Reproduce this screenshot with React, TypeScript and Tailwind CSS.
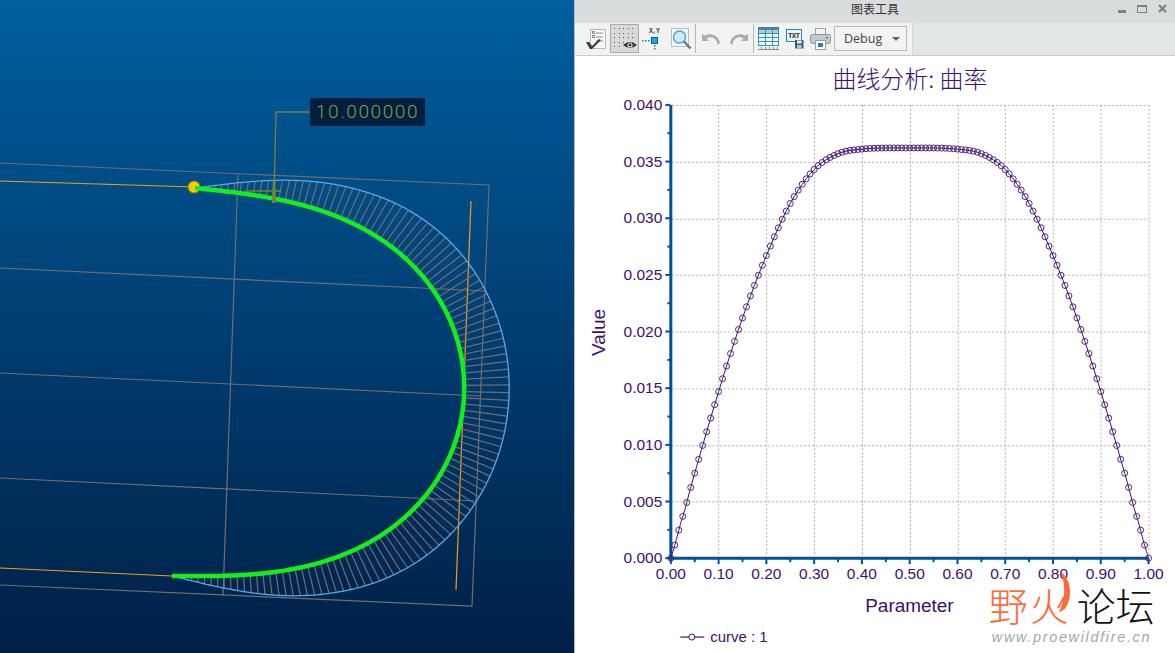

type P = [number, number];

function smooth(pts: P[], n = 12): P[] {
  const out: P[] = [];
  for (let i = 0; i < pts.length - 1; i++) {
    const p0 = pts[Math.max(i - 1, 0)], p1 = pts[i], p2 = pts[i + 1], p3 = pts[Math.min(i + 2, pts.length - 1)];
    for (let k = 0; k < n; k++) {
      const t = k / n, a = t * t, b = a * t;
      const f = (j: 0 | 1) =>
        0.5 * (2 * p1[j] + (p2[j] - p0[j]) * t + (2 * p0[j] - 5 * p1[j] + 4 * p2[j] - p3[j]) * a + (3 * p1[j] - p0[j] - 3 * p2[j] + p3[j]) * b);
      out.push([f(0), f(1)]);
    }
  }
  out.push(pts[pts.length - 1]);
  return out;
}
const toStr = (p: P[]) => p.map((q) => `${q[0].toFixed(1)},${q[1].toFixed(1)}`).join(" ");

const half: P[] = [[0, 0], [0.01, 0.0014], [0.02, 0.003], [0.03, 0.0044], [0.05, 0.0075], [0.1, 0.0147], [0.15, 0.0212], [0.2, 0.0267], [0.25, 0.0313], [0.3, 0.0343], [0.35, 0.0357], [0.4, 0.0361], [0.45, 0.0362], [0.5, 0.0362]];
const table: P[] = [...half, ...half.slice(0, -1).reverse().map(([t, v]): P => [1 - t, v])];
const fine = smooth(table, 6);
const valueAt = (t: number) => {
  for (let i = 1; i < fine.length; i++) {
    if (fine[i][0] >= t) {
      const [a, b] = [fine[i - 1], fine[i]];
      const u = b[0] === a[0] ? 0 : (t - a[0]) / (b[0] - a[0]);
      return a[1] + (b[1] - a[1]) * u;
    }
  }
  return 0;
};

// The green curve is integrated from its own curvature profile, then fitted to its two end points.
const STEPS = 480;
const START: P = [195, 188];
const END: P = [172, 576];
const TURN = 3.04;
const STRETCH = 1.052;
function buildCurve() {
  const total = Array.from({ length: STEPS }, (_, i) => valueAt((i + 0.5) / STEPS)).reduce((a, b) => a + b, 0);
  let h = 0, x = 0, y = 0;
  const raw: P[] = [[0, 0]];
  for (let i = 0; i < STEPS; i++) {
    const dh = (valueAt((i + 0.5) / STEPS) / total) * TURN;
    const mid = h + dh / 2;
    x += Math.cos(mid) / STEPS;
    y += Math.sin(mid) / STEPS;
    h += dh;
    raw.push([x, y]);
  }
  const cx = END[0] - START[0], cy = END[1] - START[1];
  const scale = Math.hypot(cx, cy) / Math.hypot(x, y);
  const rot = Math.atan2(cy, cx) - Math.atan2(y, x);
  const c = Math.cos(rot), s = Math.sin(rot);
  const g: P[] = raw.map(([rx, ry]) => {
    const gx = START[0] + (rx * c - ry * s) * scale;
    const gy = START[1] + (rx * s + ry * c) * scale;
    const line = START[0] + ((gy - START[1]) / cy) * cx;
    return [line + (gx - line) * STRETCH, gy];
  });
  const comb = 45 / 0.0362;
  const o: P[] = g.map((p, i) => {
    const a = g[Math.max(i - 1, 0)], b = g[Math.min(i + 1, STEPS)];
    const dx = b[0] - a[0], dy = b[1] - a[1], d = Math.hypot(dx, dy);
    const k = valueAt(i / STEPS) * comb;
    return [p[0] + (dy / d) * k, p[1] - (dx / d) * k];
  });
  return { g, o };
}
const { g: green, o: blue } = buildCurve();
const hatchLines: [P, P][] = [];
for (let i = 4; i < STEPS; i += 4) hatchLines.push([green[i], blue[i]]);

const X0 = 670.5, XW = 478.5, Y0 = 558, YH = 454;
const px = (t: number) => X0 + t * XW;
const py = (v: number) => Y0 - (v / 0.04) * YH;
const markers = Array.from({ length: 121 }, (_, i) => i / 120);
const curvePts = fine.map(([t, v]): P => [px(t), py(v)]);

const INK = "#3d1070";
const AXIS = "#00509b";
const FRAME = "#726e6e";

function CanvasView() {
  return (
    <div className="relative w-[574px] h-full bg-gradient-to-b from-[#005fa0] to-[#002047] overflow-hidden">
      <svg width="574" height="653" className="block">
        <g stroke={FRAME} strokeWidth="1.2" fill="none">
          <polyline points="0,163 489,185 472,606 0,585" />
          <line x1="0" y1="268" x2="485" y2="291" />
          <line x1="0" y1="373" x2="480" y2="396" />
          <line x1="0" y1="478" x2="476" y2="501" />
          <line x1="238" y1="174" x2="223" y2="596" />
        </g>
        <g stroke="#f59a1e" strokeWidth="1.2" fill="none">
          <line x1="0" y1="181" x2="195" y2="187" />
          <line x1="0" y1="568" x2="172" y2="576" />
          <line x1="471" y1="201" x2="456" y2="590" />
        </g>
        <g stroke={FRAME} strokeWidth="1.2">
          {hatchLines.map((l, i) => (
            <line key={i} x1={l[0][0]} y1={l[0][1]} x2={l[1][0]} y2={l[1][1]} />
          ))}
        </g>
        <polyline points={toStr(blue)} fill="none" stroke="#5ba8e6" strokeWidth="1.3" />
        <circle cx="194" cy="187" r="6" fill="#ffcc00" stroke="#8f7a10" strokeWidth="1.2" />
        <polyline points={toStr(green)} fill="none" stroke="#12f01c" strokeWidth="4.5" />
        <g stroke="#76833c" fill="none" strokeWidth="1.3">
          <polyline points="310,112 276,112 274,196" />
          <line x1="245" y1="191" x2="281" y2="191" />
        </g>
        <polygon points="272,203 276,203 276,197 275,180 273,180 272,197" fill="#76833c" />
      </svg>
      <div className="absolute left-[310px] top-[98px] w-[115px] h-[28px] bg-[#001f3d] flex items-center justify-center text-[#8a9c44] text-[19px] font-light tracking-[1.6px] font-['Roboto',sans-serif]">
        10.000000
      </div>
    </div>
  );
}

function IconCheck() {
  return (
    <svg width="20" height="22" viewBox="0 0 20 22">
      <rect x="4.5" y="1.5" width="15" height="19" fill="#f7f7f7" stroke="#b5b9bd" />
      <g stroke="#8a9299"><line x1="10" y1="5" x2="17" y2="5" /><line x1="10" y1="9" x2="17" y2="9" /><line x1="10" y1="13" x2="17" y2="13" /></g>
      <g fill="none" stroke="#8a9299"><rect x="6.5" y="3.5" width="2" height="2" /><rect x="6.5" y="7.5" width="2" height="2" /></g>
      <path d="M0 14 L3 14 L6 18 L13 11 L15 12 L6 21 L4 21 Z" fill="#3b3b3b" />
    </svg>
  );
}
function IconGrid() {
  const dots: P[] = [];
  for (let r = 0; r < 5; r++) for (let c = 0; c < 5; c++) if (!(r === 4 && c > 1)) dots.push([3 + c * 4.5, 3 + r * 4.5]);
  return (
    <svg width="27" height="27" viewBox="0 0 27 27">
      {dots.map(([x, y], i) => <rect key={i} x={Math.round(x)} y={Math.round(y)} width="1" height="1" fill="#555" />)}
      <path d="M12 20 Q19 14 26 20 Q19 26 12 20 Z" fill="#333" />
      <circle cx="19" cy="20" r="2.6" fill="#d8dada" />
      <circle cx="19" cy="20" r="1.4" fill="#333" />
    </svg>
  );
}
function IconXY() {
  return (
    <svg width="18" height="24" viewBox="0 0 18 24">
      <text x="7" y="6" fontSize="6.5" textLength="11" fontFamily="'Liberation Mono', monospace" fontWeight="700" fill="#444">X,Y</text>
      <g fill="#0e7fb8">
        <rect x="0" y="13" width="1.5" height="1.5" /><rect x="3" y="13" width="1.5" height="1.5" /><rect x="6" y="13" width="1.5" height="1.5" />
        <rect x="12" y="18" width="1.5" height="1.5" /><rect x="12" y="21" width="1.5" height="1.5" />
      </g>
      <rect x="9.5" y="10.5" width="6" height="6" fill="#1fa6e0" stroke="#0a5f8f" />
    </svg>
  );
}
function IconZoom() {
  return (
    <svg width="21" height="22" viewBox="0 0 21 22">
      <rect x="0.5" y="0.5" width="17" height="18" fill="#f4f6f7" stroke="#b9bec2" />
      <circle cx="8.5" cy="9" r="6" fill="#cfeafa" stroke="#4ba3cf" strokeWidth="1.4" />
      <path d="M13 13.5 L19.5 20.5" stroke="#6f7478" strokeWidth="2.4" />
    </svg>
  );
}
function IconUndo({ flip }: { flip?: boolean }) {
  return (
    <svg width="20" height="14" viewBox="0 0 20 14" className={flip ? "-scale-x-100" : ""}>
      <path d="M1 2 L1 9 L8 9 L5.6 6.6 C9 4 14 5 16 10 L16.5 13 L19 11 C18 4 10 0 4 3.8 Z" fill="#a9adb0" />
    </svg>
  );
}
function IconTable() {
  return (
    <svg width="21" height="24" viewBox="0 0 21 24">
      <rect x="0" y="0" width="21" height="2" fill="#6f767b" />
      <rect x="0.5" y="2.5" width="20" height="16" fill="#f7fafb" stroke="#2e93c5" />
      <rect x="1" y="3" width="19" height="3" fill="#9fd0ea" />
      <g stroke="#2e93c5"><line x1="1" y1="6.5" x2="20" y2="6.5" /><line x1="1" y1="10.5" x2="20" y2="10.5" /><line x1="1" y1="14.5" x2="20" y2="14.5" /><line x1="7.5" y1="3" x2="7.5" y2="18" /><line x1="14.5" y1="3" x2="14.5" y2="18" /></g>
      <g stroke="#888"><line x1="0" y1="22.5" x2="21" y2="22.5" /><line x1="3.5" y1="20" x2="3.5" y2="22" /><line x1="7.5" y1="20" x2="7.5" y2="22" /><line x1="11.5" y1="20" x2="11.5" y2="22" /><line x1="15.5" y1="20" x2="15.5" y2="22" /><line x1="19.5" y1="20" x2="19.5" y2="22" /></g>
    </svg>
  );
}
function IconTxt() {
  return (
    <svg width="18" height="20" viewBox="0 0 18 20">
      <rect x="0.5" y="0.5" width="15" height="12" fill="#eef6fb" stroke="#1b86bd" />
      <text x="2" y="9" fontSize="7.5" fontWeight="700" fontFamily="'Liberation Mono', monospace" fill="#333" textLength="12">TXT</text>
      <rect x="9" y="11" width="8.5" height="8.5" fill="#4a5a66" />
      <rect x="11" y="11.5" width="4.5" height="3" fill="#e8eef2" />
      <rect x="11" y="16" width="4.5" height="3.5" fill="#9fd0ea" />
    </svg>
  );
}
function IconPrint() {
  return (
    <svg width="21" height="22" viewBox="0 0 21 22">
      <rect x="5.5" y="0.5" width="10" height="6" fill="#f4f4f4" stroke="#9aa0a4" />
      <rect x="0.5" y="6.5" width="20" height="9" rx="2" fill="#c3c8cc" stroke="#8d9398" />
      <rect x="16" y="9" width="2" height="1.5" fill="#3f8fbd" />
      <rect x="5.5" y="12.5" width="10" height="9" fill="#fff" stroke="#9aa0a4" />
      <rect x="8" y="15" width="5" height="4" fill="#2f7fa8" />
    </svg>
  );
}

function Toolbar() {
  return (
    <div className="flex h-[33px] bg-[#e3e6e6] border-b border-[#c9cccc]">
      <div className="flex items-center w-[338px] h-[32px] bg-[#f1f2f2] border-r border-[#d5d8d8]">
        <div className="ml-[11px] w-[20px] flex"><IconCheck /></div>
        <div className="ml-[4px] w-[29px] h-[29px] flex items-center justify-center bg-[#d8dada] border border-[#a9abab]"><IconGrid /></div>
        <div className="ml-[3px] w-[18px] flex"><IconXY /></div>
        <div className="ml-[11px] w-[21px] flex"><IconZoom /></div>
        <div className="ml-[3px] w-px h-[29px] bg-[#b4b7b7]" />
        <div className="ml-[5px] w-[20px] flex"><IconUndo /></div>
        <div className="ml-[8px] w-[20px] flex"><IconUndo flip /></div>
        <div className="ml-[4px] w-px h-[29px] bg-[#b4b7b7]" />
        <div className="ml-[4px] w-[21px] flex"><IconTable /></div>
        <div className="ml-[7px] w-[18px] flex"><IconTxt /></div>
        <div className="ml-[6px] w-[21px] flex"><IconPrint /></div>
        <div className="ml-[3px] w-[73px] h-[25px] flex items-center justify-between pl-[9px] pr-[6px] bg-[#f2f3f3] border border-[#b9bcbc] text-[12.5px] text-[#444] font-['Open_Sans','Liberation_Sans',sans-serif]">
          <span>Debug</span>
          <span className="w-0 h-0 border-l-[4px] border-r-[4px] border-t-[4px] border-l-transparent border-r-transparent border-t-[#666]" />
        </div>
      </div>
    </div>
  );
}

function Chart() {
  const xLabels = Array.from({ length: 11 }, (_, i) => i / 10);
  const yLabels = Array.from({ length: 9 }, (_, i) => i * 0.005);
  const O = 55;
  const sans = "'Liberation Sans', Arial, sans-serif";
  return (
    <svg width="600" height="598" viewBox={`575 ${O} 600 598`} className="block">
      <text x="910" y="87" textAnchor="middle" fontSize="24" fontWeight="300" fill={INK} fontFamily={`'Noto Sans CJK SC',sans-serif`}>曲线分析: 曲率</text>
      <g stroke="#b0b0b0" strokeDasharray="2 2" strokeWidth="1">
        {xLabels.slice(1).map((t) => <line key={t} x1={Math.round(px(t)) + 0.5} y1="104" x2={Math.round(px(t)) + 0.5} y2="556" />)}
        {yLabels.slice(1).map((v) => <line key={v} x1="672" y1={Math.round(py(v)) + 0.5} x2="1149" y2={Math.round(py(v)) + 0.5} />)}
      </g>
      <g stroke={AXIS}>
        {yLabels.map((v) => <line key={v} x1="665" x2="670" y1={py(v)} y2={py(v)} strokeWidth="2" />)}
        {yLabels.slice(1).map((v) => <line key={v} x1="667" x2="670" y1={py(v - 0.0025)} y2={py(v - 0.0025)} strokeWidth="2" />)}
        {xLabels.map((t) => <line key={t} x1={px(t)} x2={px(t)} y1="558" y2="564" strokeWidth="2" />)}
        {xLabels.slice(1).map((t) => <line key={t} x1={px(t - 0.05)} x2={px(t - 0.05)} y1="558" y2="562" strokeWidth="2" />)}
        <line x1={X0} x2={X0} y1="104" y2="559.5" strokeWidth="3" />
        <line x1={X0 - 1.5} x2="1149" y1="558" y2="558" strokeWidth="3" />
      </g>
      <polyline points={toStr(curvePts)} fill="none" stroke={INK} strokeWidth="1" />
      <g fill="none" stroke={INK} strokeWidth="0.9">
        {markers.map((t) => <circle key={t} cx={px(t)} cy={py(valueAt(t))} r="3" />)}
      </g>
      <g fontFamily={sans} fontSize="15.5" fill={INK}>
        {yLabels.map((v) => <text key={v} x="662" y={py(v) + 5} textAnchor="end">{v.toFixed(3)}</text>)}
        {xLabels.map((t) => <text key={t} x={px(t)} y="579" textAnchor="middle">{t.toFixed(2)}</text>)}
      </g>
      <text x="909.5" y="612" textAnchor="middle" fontSize="19" fontFamily={sans} fill={INK}>Parameter</text>
      <text transform="translate(604.5 332) rotate(-90)" textAnchor="middle" fontSize="19" fontFamily={sans} fill={INK}>Value</text>
      <line x1="680" x2="704" y1="637" y2="637" stroke={INK} strokeWidth="1.2" />
      <circle cx="691.5" cy="637" r="3" fill="#fff" stroke={INK} />
      <text x="710" y="642" fontSize="15" fontFamily={sans} fill={INK}>curve : 1</text>
      <g fontFamily="'Noto Sans CJK SC',sans-serif" fontSize="39" fontWeight="300">
        <text x="989" y="621" fill="#ff6a3a">野</text>
        <text x="1030" y="621" fill="#ff6a3a">火</text>
        <text x="1077" y="621" fill="#111">论坛</text>
      </g>
      <path d="M1061 571 C1070 578 1073 592 1068 604 C1066 609 1063 611 1059 612 C1066 600 1066 585 1061 571 Z" fill="#ff6a3a" />
      <text x="992" y="642" fontSize="14.5" fontStyle="italic" fontFamily={sans} fill="#a6a6a6" textLength="158">www.proewildfire.cn</text>
    </svg>
  );
}

function ChartPanel() {
  return (
    <div className="flex-1 flex flex-col bg-white h-full overflow-hidden">
      <div className="relative h-[23px] pb-[4px] bg-[#dadddd] flex items-center justify-center text-[12px] text-[#333] font-['Noto_Sans_CJK_SC',sans-serif]">
        <span>图表工具</span>
        <div className="absolute right-[8px] top-[4px] flex items-center gap-[11px]">
          <span className="w-[8px] h-[3px] mt-[6px] bg-[#7b8085]" />
          <span className="w-[10px] h-[8px] border border-[#7b8085] border-t-[2px]" />
          <svg width="9" height="9" viewBox="0 0 9 9"><path d="M1 1 L8 8 M8 1 L1 8" stroke="#7b8085" strokeWidth="2.2" /></svg>
        </div>
      </div>
      <Toolbar />
      <Chart />
    </div>
  );
}

export default function App() {
  return (
    <div className="flex w-[1175px] h-[653px] overflow-hidden bg-white">
      <CanvasView />
      <div className="w-px h-full bg-[#b8bcbc]" />
      <ChartPanel />
    </div>
  );
}
